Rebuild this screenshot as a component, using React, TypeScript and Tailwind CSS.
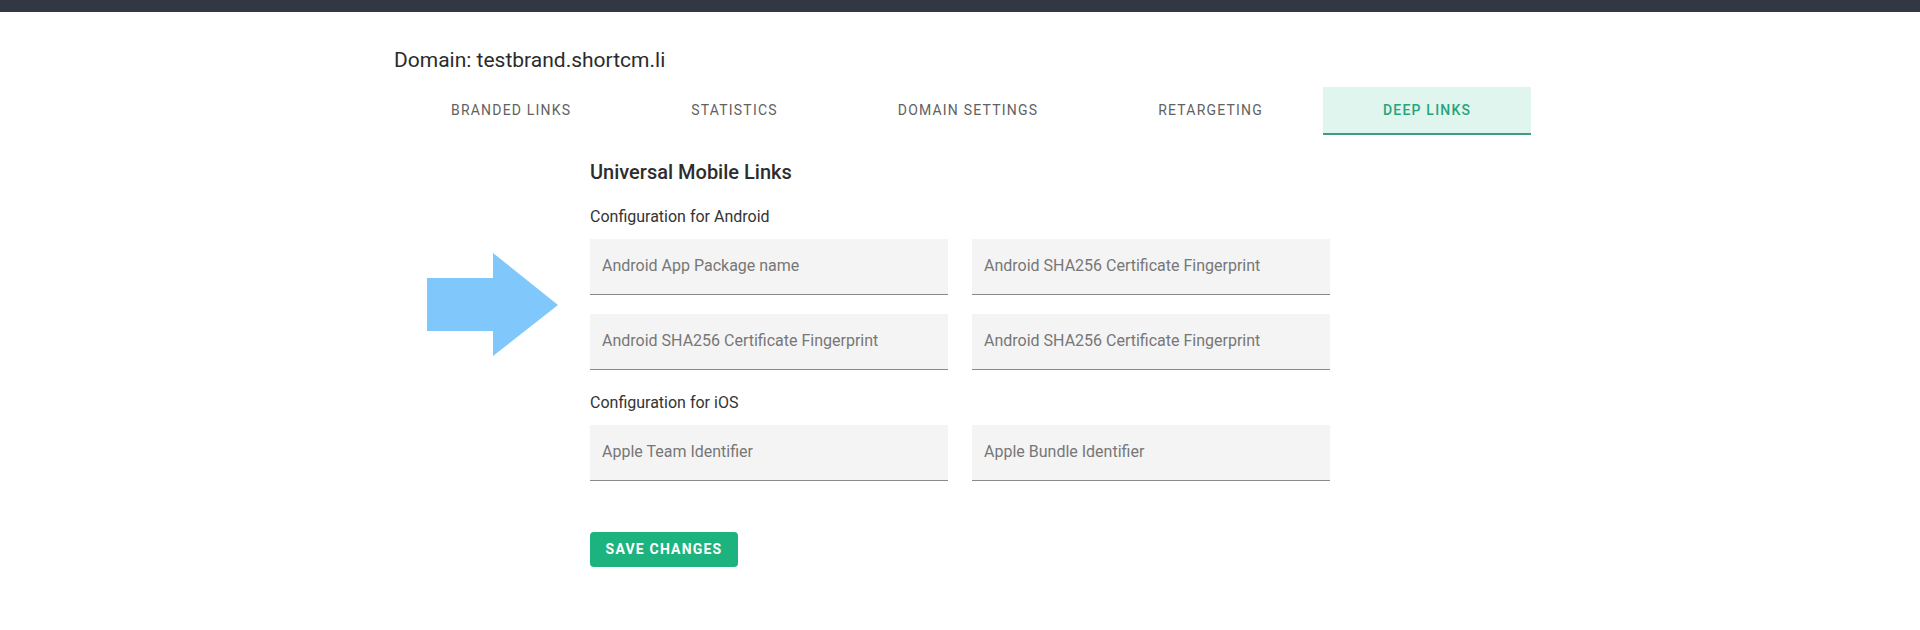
import React from 'react';

const tabs = ['Branded Links', 'Statistics', 'Domain Settings', 'Retargeting', 'Deep Links'];

// Filled text field, MUI style
const Field: React.FC<{ placeholder: string }> = ({ placeholder }) => (
  <input
    type="text"
    placeholder={placeholder}
    className="h-14 w-full bg-[#f4f4f4] border-b border-[#8a8a8a] px-3 pb-[3px] text-[16px] text-[#333] placeholder:text-[#777] outline-none"
  />
);

const App: React.FC = () => {
  const active = 'Deep Links';

  return (
    <div className="min-h-screen bg-white font-['Roboto',sans-serif]">
      <div className="h-3 bg-[#323743]" />

      <div className="w-[1138px] mx-auto">
        <h1 className="mt-[34px] pl-[3px] text-[21px] leading-7 text-[#2b2b2b]">Domain: testbrand.shortcm.li</h1>

        {/* Tabs */}
        <div className="mt-[13px] flex h-12">
          {tabs.map((tab) => {
            const isActive = tab === active;
            return (
              <div
                key={tab}
                className={
                  isActive
                    ? 'flex shrink-0 items-center whitespace-nowrap px-[60px] border-b-2 border-[#3d9c84] bg-[#e1f5ef] text-[14px] font-medium uppercase tracking-[1.2px] text-[#27a47b]'
                    : 'flex shrink-0 items-center whitespace-nowrap px-[60px] border-b-2 border-transparent text-[14px] uppercase tracking-[1.2px] text-[#616161]'
                }
              >
                {tab}
              </div>
            );
          })}
        </div>

        {/* Deep links form */}
        <div className="relative w-[740px] mx-auto mt-[25px]">
          <svg
            className="absolute left-[-163px] top-[93px]"
            width="131"
            height="103"
            viewBox="0 0 131 103"
          >
            <path d="M0 25H66V0L131 52L66 103V78H0Z" fill="#80c8fb" />
          </svg>

          <h2 className="text-[20px] leading-6 font-medium text-[#2d2d2d]">Universal Mobile Links</h2>

          <p className="mt-[23px] text-[16px] leading-5 text-[#333]">Configuration for Android</p>
          <div className="mt-3 grid grid-cols-2 gap-x-6 gap-y-[19px]">
            <Field placeholder="Android App Package name" />
            <Field placeholder="Android SHA256 Certificate Fingerprint" />
            <Field placeholder="Android SHA256 Certificate Fingerprint" />
            <Field placeholder="Android SHA256 Certificate Fingerprint" />
          </div>

          <p className="mt-[23px] text-[16px] leading-5 text-[#333]">Configuration for iOS</p>
          <div className="mt-3 grid grid-cols-2 gap-x-6">
            <Field placeholder="Apple Team Identifier" />
            <Field placeholder="Apple Bundle Identifier" />
          </div>

          <button className="mt-[51px] h-[35px] w-[148px] rounded-[4px] bg-[#1db37e] text-[14px] font-bold uppercase tracking-[1.2px] text-white">
            Save Changes
          </button>
        </div>
      </div>
    </div>
  );
};

export default App;
